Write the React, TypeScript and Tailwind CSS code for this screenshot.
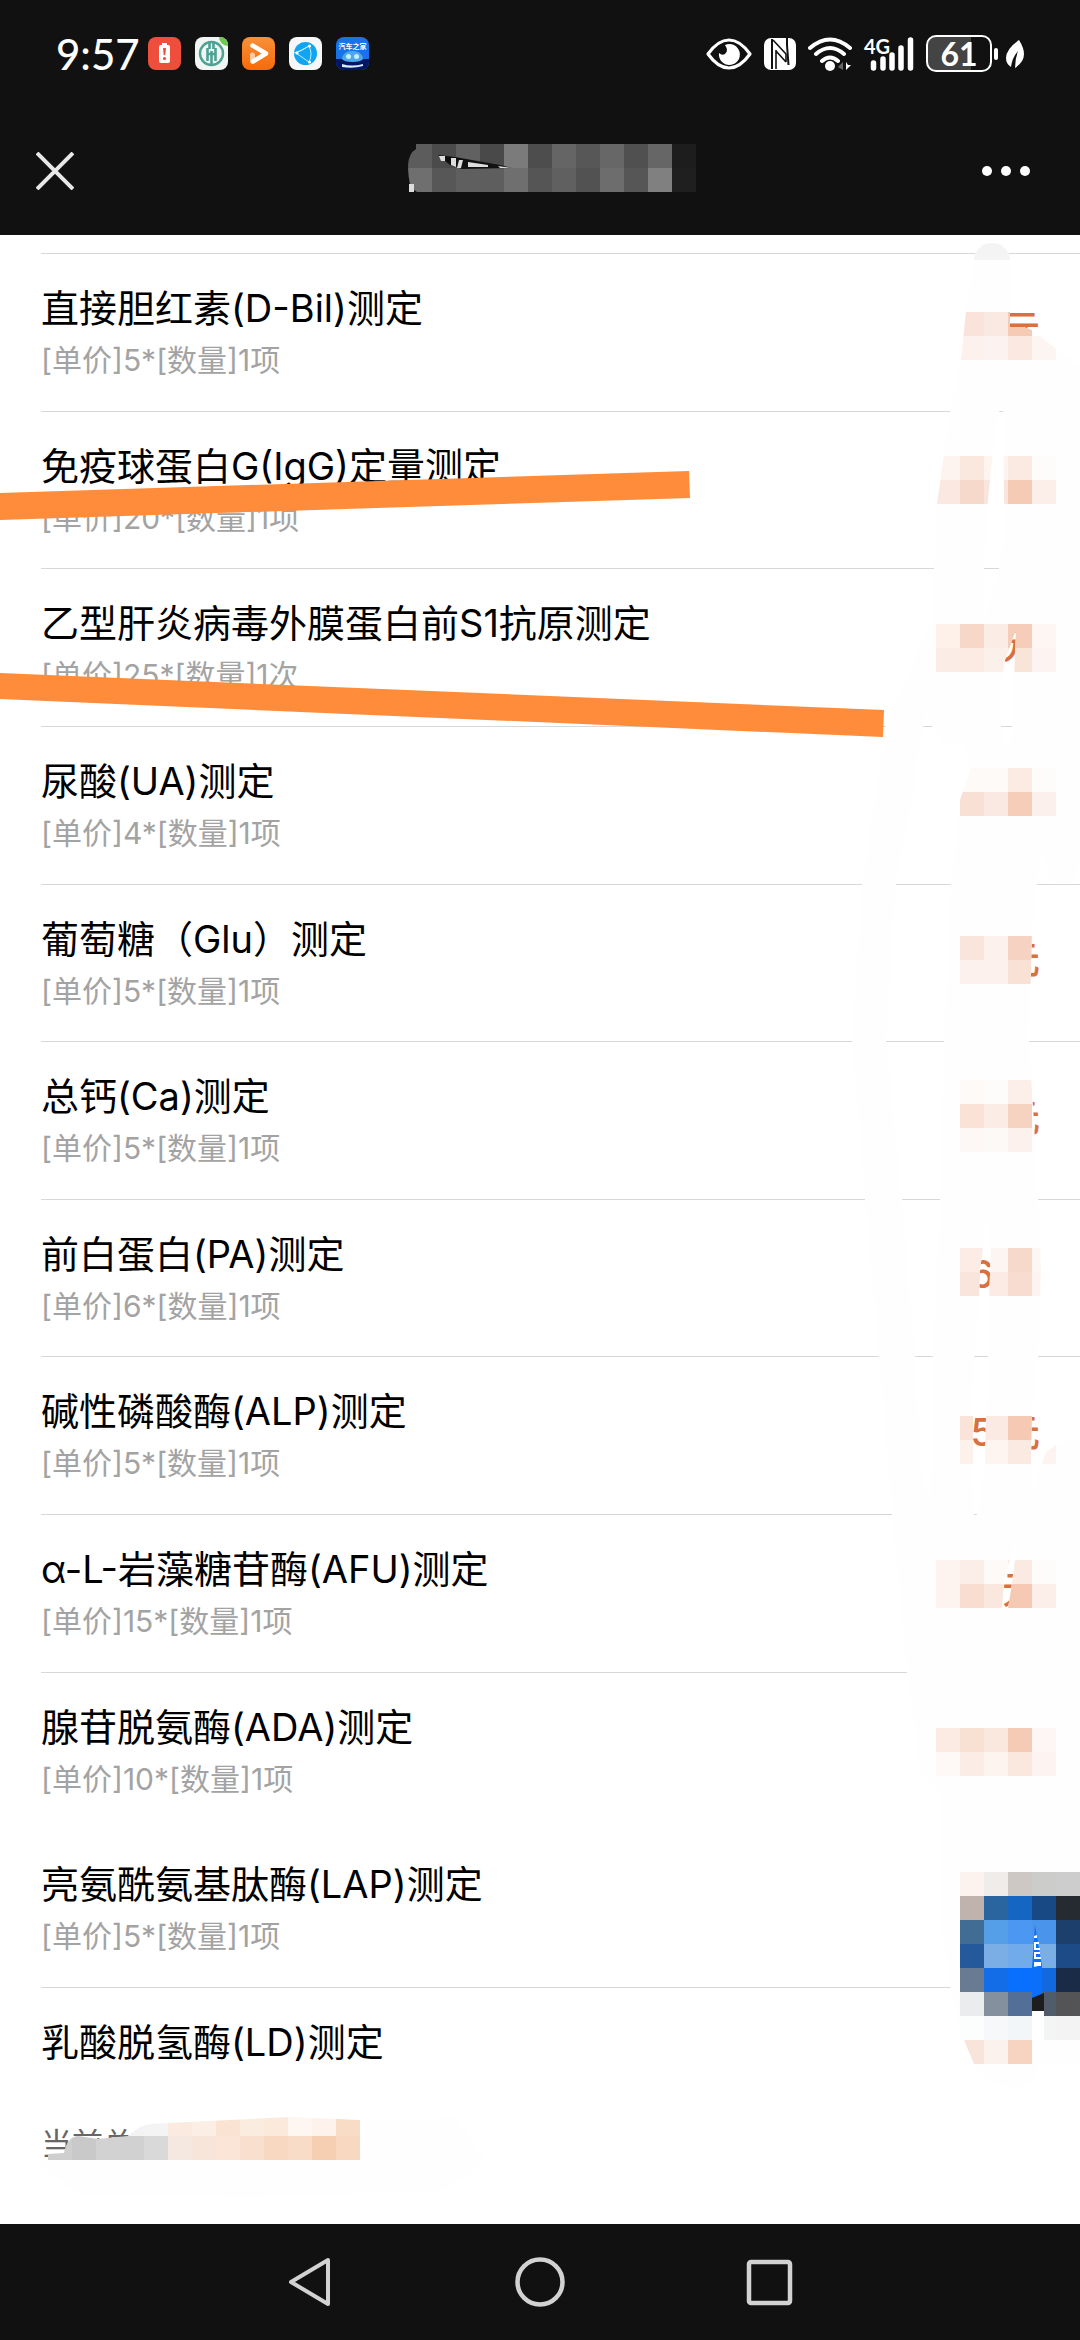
type Item = { name: string; detail: string; amount?: string; hideLine?: boolean }

const items: Item[] = [
  { name: '直接胆红素(D-Bil)测定', detail: '[单价]5*[数量]1项', amount: '5' },
  { name: '免疫球蛋白G(IgG)定量测定', detail: '[单价]20*[数量]1项' },
  { name: '乙型肝炎病毒外膜蛋白前S1抗原测定', detail: '[单价]25*[数量]1次', amount: '25' },
  { name: '尿酸(UA)测定', detail: '[单价]4*[数量]1项' },
  { name: '葡萄糖（Glu）测定', detail: '[单价]5*[数量]1项', amount: '5' },
  { name: '总钙(Ca)测定', detail: '[单价]5*[数量]1项', amount: '5' },
  { name: '前白蛋白(PA)测定', detail: '[单价]6*[数量]1项', amount: '6' },
  { name: '碱性磷酸酶(ALP)测定', detail: '[单价]5*[数量]1项', amount: '5' },
  { name: 'α-L-岩藻糖苷酶(AFU)测定', detail: '[单价]15*[数量]1项', amount: '15' },
  { name: '腺苷脱氨酶(ADA)测定', detail: '[单价]10*[数量]1项' },
  { name: '亮氨酰氨基肽酶(LAP)测定', detail: '[单价]5*[数量]1项', hideLine: true },
]

// x, y of the first cell, then one colour per 24px cell
type Strip = [number, number, string[]]

const titleStrips: Strip[] = [
  [408, 144, ['#5c5c5c', '#4b4b4b', '#616161', '#494949', '#7b7b7b', '#4d4d4d', '#656565', '#575757', '#676767', '#505050', '#666666', '#1d1d1d']],
  [408, 168, ['#6f6f6f', '#575757', '#5f5f5f', '#5e5e5e', '#6f6f6f', '#555555', '#606060', '#525252', '#6d6d6d', '#565656', '#808080', '#1f1f1f']],
]

const priceStrips: Strip[] = [
  [960, 312, ['#f9e3da', '#fae9e2', '#f6cbb5']],
  [960, 336, ['#fcf1ed', '#fcf2ef', '#fbe8e0', '#fdf5f2']],
  [936, 456, ['#fdf3ef', '#fae8df', '#fdf4ef', '#faeae2', '#fefcfb']],
  [936, 480, ['#fbe9e1', '#f6d9cb', '#fae5dc', '#f5cbb5', '#fcefea']],
  [936, 624, ['#fdf1ea', '#f7d7c8', '#fbece6', '#f5cdb9', '#fdf6f3']],
  [936, 648, ['#fbece5', '#fbebe3', '#fcf0eb', '#f9e4d8', '#fdf4f1']],
  [960, 768, ['#fefaf8', '#fefaf8', '#fbebe3', '#fefcfb']],
  [960, 792, ['#f9e0d5', '#fae9e2', '#f6cdb8', '#fcf0ec']],
  [960, 936, ['#f9e5db', '#fcf1ec', '#f5d2c1']],
  [960, 960, ['#fcf1ec', '#fcf1ec', '#f9e1d5']],
  [960, 1080, ['#fefaf8', '#fefcfb', '#fcefe9']],
  [960, 1104, ['#fbe2d7', '#fbede6', '#f6d2c0']],
  [960, 1128, ['#fdf8f6', '#fdf9f7', '#fcf1ed']],
  [960, 1248, ['#fcece5', '#fdf5f1', '#f6d9cb', '#fdf7f4']],
  [960, 1272, ['#fae5dc', '#fbebe4', '#f7dccf', '#fdf4f1']],
  [960, 1416, ['#fae3d9', '#fbeae3', '#f5c9b3']],
  [960, 1440, ['#fdf1ec', '#fef5f1', '#fbeae2', '#fdf4f1']],
  [936, 1560, ['#fdf3ef', '#fbeee8', '#fefaf7', '#faeae2', '#fefcfa']],
  [936, 1584, ['#fdf3ef', '#f8ddd0', '#fae7de', '#f5c9b3', '#fcefea']],
  [936, 1728, ['#fcebe3', '#f8e0d2', '#fae7dd', '#f5cbb5', '#fdf6f4']],
  [936, 1752, ['#fef8f6', '#fbece5', '#fdf4f0', '#fae7de', '#fdf4f1']],
]

const buttonStrips: Strip[] = [
  [960, 1872, ['#fcf3ef', '#f0ece9', '#cec8c4', '#cccdcb', '#cdcdcd']],
  [960, 1896, ['#c0b3ae', '#2b659f', '#1565c2', '#194984', '#262a31']],
  [960, 1920, ['#416c93', '#549fe8', '#4b97f1', '#4b94ec', '#1d3f6c']],
  [960, 1944, ['#245a9b', '#7baee4', '#72abeb', '#79afe5', '#1d4b87']],
  [960, 1968, ['#697b93', '#136de6', '#0970fe', '#1168df', '#1a2b47']],
  [960, 1992, ['#eaecee', '#85909e', '#536f98', '#515c6b', '#545457']],
  [960, 2016, ['#fcfdfd', '#f6f8fa', '#f3f6f9', '#f3f4f4', '#f3f3f3']],
]

const totalStrips: Strip[] = [
  [120, 2112, ['#f3f3f3', '#f4f4f4', '#fbeadf', '#fbeee5', '#fae3d2', '#fbece0', '#fbeadc', '#fdf6f1', '#fdf3ec', '#f9dcc6']],
  [48, 2136, ['#cfcfcf', '#c9c9c9', '#d2d2d2', '#d1d1d1', '#d9d9d9', '#f4e8e0', '#f8e5d9', '#fae5d6', '#f9e0ce', '#f8d8c0', '#f9dcc8', '#f6ceb2', '#f8d8c1']],
]

// outline of the brushed area over the prices, with the spots the brush missed
const brush = [
  'M974 262 L966 311 961 360 950 411 937 504 934 568 931 620 886 726 862 883 852 1041 865 1199 879 1357 892 1514 907 1672 920 1770 940 1790 942 1930 950 1987 960 2030 974 2066 990 2082 1012 2088 1032 2084 1040 2064 1054 2064 1080 2064 1080 1440 1060 1442 1046 1452 1040 1470 1031 1500 1031 1460 1032 1410 1038 1357 1041 1270 1038 1199 1035 1140 1029 1041 1031 970 1032 930 1037 883 1042 850 1051 883 1073 883 1080 860 1080 366 1055 348 1034 331 1024 327 1010 327 1010 262Z',
  'M1001 400 L1003 411 1004 500 1006 520 999 568 984 620 984 568 988 500 993 450Z',
  'M1016 630 L1014 680 1012 726 1010 745 1003 745 1001 726 1000 690 1005 660Z',
  'M925 712 L932 726 945 745 965 745 970 770 960 800 951 883 944 1041 940 1199 933 1357 930 1500 922 1480 915 1357 902 1199 886 1041 896 883 912 800 923 726Z',
  'M986 1215 L991 1248 989 1300 988 1357 986 1416 985 1464 977 1514 974 1520 973 1464 973 1416 974 1357 979 1300 980 1270 984 1240Z',
  'M1018 1535 L1015 1560 1011 1590 1008 1608 1002 1608 1004 1580 1009 1562Z',
].join(' ')

function Mosaic({ strips }: { strips: Strip[] }) {
  return (
    <>
      {strips.map(([x, y, colors]) =>
        colors.map((color, i) => (
          <rect key={`${x}-${y}-${i}`} x={x + i * 24} y={y} width={24} height={24} fill={color} shapeRendering="crispEdges" />
        ))
      )}
    </>
  )
}

function Markup() {
  return (
    <svg viewBox="0 0 1080 2340" className="pointer-events-none absolute inset-0 w-full" aria-hidden="true">
      <defs>
        <clipPath id="brush">
          <path d={brush} clipRule="evenodd" />
        </clipPath>
        <clipPath id="title">
          <path d="M416 144H696V192H417L411 188Q408 178 408 165Q409 153 416 149Z" />
        </clipPath>
        <clipPath id="total">
          <path d="M40 2160 L48 2154 64 2153 Q67 2137 78 2136 L98 2139 128 2136 Q140 2125 150 2124 L168 2123 290 2117 360 2120 V2160Z" />
        </clipPath>
      </defs>

      <g clipPath="url(#title)">
        <Mosaic strips={titleStrips} />
        <path d="M438 155 L455 157 500 165 512 168 462 169 450 165Z" fill="#111" />
        <path d="M439 156h6v5h-4zM451 158h5v9l-5-2zM459 160h4l-2 8h-4zM468 162l20 3v2h-20zM498 166l14 2h-12z" fill="#ddd" />
      </g>
      <path d="M409 184h5v8h-5z" fill="#ddd" />

      <path d={brush} fill="#fefefe" fillRule="evenodd" />
      <path d="M974 260a18 17 0 0 1 36 0z" fill="#f4f4f4" />
      <g clipPath="url(#brush)">
        <Mosaic strips={priceStrips} />
      </g>

      <Mosaic strips={buttonStrips} />
      <path d="M1035 1925l7 41v28l-10 4v-30z" fill="#0a6ffb" />
      <path d="M1034 1936l3-1v3h-3zM1034 1942h5v2h-3v4h4v2h-6zM1034 1952h6v2h-4v3h5v2h-7zM1034 1962h7v4h-3l-4 1z" fill="#fff" />
      <path d="M1032 1998l12-5v18h-12z" fill="#1d1d1d" />
      <path d="M1032 2011h12v29h-12z" fill="#fff" />
      <path d="M964 2040h20v24h-10z" fill="#f9e4db" />
      <path d="M984 2040h24v24h-24z" fill="#fcf2ed" />
      <path d="M1008 2040h24v24h-24z" fill="#f6d4c1" />

      <path d="M36 2160h324l6-40 90-2 30 42-40 30-200 8-170-4z" fill="#fefefe" />
      <g clipPath="url(#total)">
        <Mosaic strips={totalStrips} />
      </g>

      <path d="M0 493 L689 471 690 498 0 520Z" fill="#ff8c3a" />
      <path d="M0 673 L884 710 883 737 0 699Z" fill="#ff8c3a" />
    </svg>
  )
}

function AppBadges() {
  return (
    <div className="flex gap-[14px]">
      <svg className="size-[33px]" viewBox="0 0 33 33">
        <rect width="33" height="33" rx="8" fill="#ee4f3c" />
        <path d="M14 6h5v3h-5z" fill="#fff" />
        <rect x="11" y="8" width="11" height="18" rx="2" fill="#fff" />
        <path d="M15 11h3l-.7 7h-1.6z" fill="#ee4f3c" />
        <circle cx="16.500" cy="21.500" r="1.600" fill="#ee4f3c" />
      </svg>
      <svg className="size-[33px]" viewBox="0 0 33 33">
        <rect width="33" height="33" rx="8" fill="#f1f5f3" />
        <path d="M24 0h1a8 8 0 0 1 8 8v1a9 9 0 0 1-9-9z" fill="#6dc94f" />
        <circle cx="16.500" cy="16.500" r="11.500" fill="none" stroke="#4da293" strokeWidth="2.400" />
        <path d="M14.500 4v8M18.500 4v8M12.500 11v13M20.500 11v13M16.500 14v14M12.500 17h8" fill="none" stroke="#4da293" strokeWidth="2.600" />
      </svg>
      <svg className="size-[33px]" viewBox="0 0 33 33">
        <defs>
          <linearGradient id="play" x2="0" y2="1">
            <stop stopColor="#f7913a" />
            <stop offset="1" stopColor="#f76a08" />
          </linearGradient>
        </defs>
        <rect width="33" height="33" rx="8" fill="url(#play)" />
        <path d="M10.500 18v6" fill="none" stroke="#fbc9a2" strokeWidth="5" strokeLinecap="round" />
        <path d="M10.500 8.500L24 16.500 11 24.500" fill="none" stroke="#fff" strokeWidth="4.500" strokeLinecap="round" strokeLinejoin="round" />
      </svg>
      <svg className="size-[33px]" viewBox="0 0 33 33">
        <rect width="33" height="33" rx="8" fill="#f6f7f8" />
        <circle cx="16.500" cy="16.500" r="11.500" fill="#0fa5f2" />
        <path d="M7 16L20 9M7 16l13 9M20 9q4 8 0 16M5 16q8-2 15-7" fill="none" stroke="#c7ebfd" />
        <circle cx="8" cy="16" r="1.600" fill="#fff" />
        <circle cx="20.500" cy="9" r="1.600" fill="#fff" />
        <circle cx="20.500" cy="25" r="1.600" fill="#fff" />
      </svg>
      <svg className="size-[33px]" viewBox="0 0 33 33">
        <defs>
          <clipPath id="tile">
            <rect width="33" height="33" rx="8" />
          </clipPath>
        </defs>
        <g clipPath="url(#tile)">
          <rect width="33" height="33" fill="#1673e8" />
          <path d="M0 22h33v11H0z" fill="#04165f" />
          <path d="M6 22q1-8 10.500-8T27 22q-2 3-10.500 3T6 22z" fill="#4aa9f0" />
          <circle cx="12.500" cy="19.500" r="2.500" fill="#c9ecff" />
          <circle cx="20.500" cy="19.500" r="2.500" fill="#c9ecff" />
          <path d="M6 27q10 3 21 0v2q-10 3-21 1z" fill="#d6ecff" />
          <text x="16.500" y="12" textAnchor="middle" fontSize="7" fontWeight="700" fill="#fff">汽车之家</text>
        </g>
      </svg>
    </div>
  )
}

function StatusIcons() {
  return (
    <div className="flex items-center">
      <svg className="mr-3 h-8 w-[46px]" viewBox="0 0 46 32">
        <path d="M2 16Q12 2 23 2t21 14Q34 30 23 30T2 16z" fill="none" stroke="#fff" strokeWidth="3.200" strokeLinejoin="round" />
        <path d="M19 7a10.500 10.500 0 1 1-6 8q3 3 6 1 4-3 0-9z" fill="#fff" />
      </svg>
      <svg className="mr-3 size-8" viewBox="0 0 32 32">
        <rect width="32" height="32" rx="7" fill="#fff" />
        <path d="M8 1v30M23 0v7l1.500 20" fill="none" stroke="#111" strokeWidth="2" />
        <path d="M12 12v19M9 2l13 14v8M12 13l10 11" fill="none" stroke="#111" strokeWidth="1.600" />
      </svg>
      <svg className="mr-3 h-9 w-11" viewBox="0 0 44 36">
        <path d="M2 12q20-17 40 0M8 18q14-12 28 0M14 25q8-7 16 0" fill="none" stroke="#fff" strokeWidth="4" strokeLinecap="round" />
        <circle cx="22" cy="30" r="5" fill="#fff" />
        <path d="M30 31l5-5v8z" fill="#666" />
        <path d="M38 26v8l5-5h-3z" fill="#fff" />
      </svg>
      <svg className="mr-3 h-9 w-[50px] overflow-visible" viewBox="0 0 50 36">
        <text x="0" y="18" className="text-[20px] font-bold" fill="#fff">4G</text>
        <path d="M9.500 27v5M19 23v9M28 19v13M37 12v20M46.500 4v28" fill="none" stroke="#fff" strokeWidth="5.500" strokeLinecap="round" />
      </svg>
      <div className="flex h-[37px] w-[66px] items-center justify-center rounded-[10px] border-2 border-white bg-[linear-gradient(90deg,#444_70%,#111_70%)] text-[32px] font-bold leading-8 text-white">
        61
      </div>
      <div className="ml-0.5 h-3 w-1 rounded-sm bg-white" />
      <svg className="ml-2 h-7 w-[18px]" viewBox="0 0 18 28">
        <path d="M13 0q5 8 5 14 0 8-9 14 0-9 3-17-6 7-7 16-5-3-5-9Q0 9 13 0z" fill="#fff" />
      </svg>
    </div>
  )
}

export default function App() {
  return (
    <div className="relative flex min-h-screen flex-col bg-white text-black">
      <div className="flex h-[107px] items-center justify-between bg-[#111] px-14 font-['Lato','Noto_Sans_CJK_SC',sans-serif]">
        <div className="flex items-center gap-2">
          <span className="text-[42px] font-medium leading-none text-white">9:57</span>
          <AppBadges />
        </div>
        <StatusIcons />
      </div>

      <header className="flex h-32 items-center justify-between bg-[#111] px-9">
        <button aria-label="关闭">
          <svg className="size-[38px]" viewBox="0 0 38 38">
            <path d="M1 1l36 36M37 1L1 37" stroke="#e8e8e8" strokeWidth="4" />
          </svg>
        </button>
        <button aria-label="更多" className="pr-[14px]">
          <svg className="h-3 w-12" viewBox="0 0 48 12">
            <circle cx="5" cy="6" r="5" fill="#fff" />
            <circle cx="24" cy="6" r="5" fill="#fff" />
            <circle cx="43" cy="6" r="5" fill="#fff" />
          </svg>
        </button>
      </header>

      <main className="flex flex-1 flex-col pl-[41px] pt-[18px] font-['Inter','Noto_Sans_CJK_SC',sans-serif]">
        <ul className="flex flex-1 flex-col">
          {items.map((item) => (
            <li
              key={item.name}
              className={`flex flex-1 items-center justify-between border-t pr-10 ${item.hideLine ? 'border-transparent' : 'border-[#d8d8d8]'}`}
            >
              <div className="self-start pt-7">
                <h2 className="text-[38px] leading-[52px]">{item.name}</h2>
                <p className="mt-1.5 text-[30px] leading-10 text-[#a3a3a3]">{item.detail}</p>
              </div>
              {item.amount && (
                <span className="flex gap-2 pb-2 text-[38px] font-medium leading-[52px] text-[#d9703f]">
                  <span>{item.amount}</span>
                  <span>元</span>
                </span>
              )}
            </li>
          ))}
        </ul>
        <div className="h-[119px] border-t border-[#d8d8d8] pt-7">
          <h2 className="text-[38px] leading-[52px]">乳酸脱氢酶(LD)测定</h2>
        </div>
        <footer className="h-[118px] pt-[18px]">
          <span className="text-[31px] leading-10 text-[#666]">当前总</span>
        </footer>
      </main>

      <nav className="flex h-[116px] items-center justify-center gap-[180px] bg-[#111]">
        <button aria-label="返回">
          <svg className="size-[50px]" viewBox="0 0 50 50">
            <path d="M43 3v44L6 25z" fill="none" stroke="#d2d2d2" strokeWidth="4" strokeLinejoin="round" />
          </svg>
        </button>
        <button aria-label="主页">
          <svg className="size-[50px]" viewBox="0 0 50 50">
            <circle cx="25" cy="25" r="22.500" fill="none" stroke="#d2d2d2" strokeWidth="4.500" />
          </svg>
        </button>
        <button aria-label="最近任务">
          <svg className="size-[50px]" viewBox="0 0 50 50">
            <rect x="4" y="5" width="41" height="41" rx="2" fill="none" stroke="#d2d2d2" strokeWidth="4.500" />
          </svg>
        </button>
      </nav>

      <Markup />
    </div>
  )
}
